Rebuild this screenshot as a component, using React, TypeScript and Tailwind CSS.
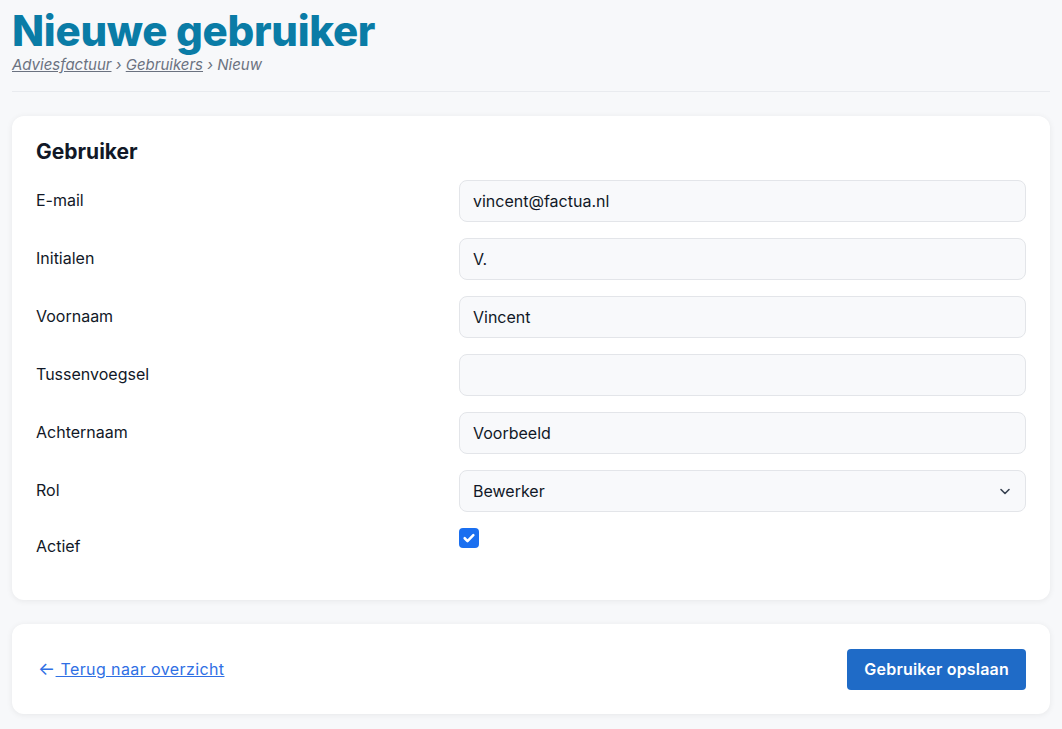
import { useState } from "react";

const font = { fontFamily: "Inter, 'Noto Sans', sans-serif" };

function Field({ label, value }: { label: string; value: string }) {
  const [v, setV] = useState(value);
  return (
    <div className="flex items-center h-[42px]">
      <label className="w-[423px] text-[16px] text-[#111827] -mt-[2px]">{label}</label>
      <input
        value={v}
        onChange={(e) => setV(e.target.value)}
        className="flex-1 h-[42px] px-[13px] text-[16px] text-[#111827] bg-[#f8f9fb] border border-[#e3e5e9] rounded-[8px] outline-none"
      />
    </div>
  );
}

export default function App() {
  const [rol, setRol] = useState("Bewerker");
  const [actief, setActief] = useState(true);

  return (
    <main className="min-h-screen w-full bg-[#f7f8fa] px-[12px] pb-[15px]" style={font}>
      <div className="pt-[6px] pb-[17px] border-b border-[#e9ebef]">
        <h1 className="text-[42px] leading-[50px] font-extrabold text-[#0a7ca6] tracking-[-0.3px]">
          Nieuwe gebruiker
        </h1>
        <div className="text-[15px] italic text-[#6b7280] leading-[18px]">
          <a href="#" className="underline">Adviesfactuur</a>
          <span> › </span>
          <a href="#" className="underline">Gebruikers</a>
          <span> › </span>
          <span>Nieuw</span>
        </div>
      </div>

      <section className="mt-[24px] bg-white rounded-[12px] shadow-[0_1px_6px_rgba(0,0,0,0.07)] px-[24px] pt-[23px] pb-[30px]">
        <h2 className="text-[21px] font-bold text-[#111827] leading-[26px] mb-[15px]">Gebruiker</h2>
        <div className="flex flex-col gap-[16px]">
          <Field label="E-mail" value="vincent@factua.nl" />
          <Field label="Initialen" value="V." />
          <Field label="Voornaam" value="Vincent" />
          <Field label="Tussenvoegsel" value="" />
          <Field label="Achternaam" value="Voorbeeld" />
          <div className="flex items-center h-[42px]">
            <label className="w-[423px] text-[16px] text-[#111827] -mt-[2px]">Rol</label>
            <div className="flex-1 relative">
              <select
                value={rol}
                onChange={(e) => setRol(e.target.value)}
                className="appearance-none w-full h-[42px] px-[13px] text-[16px] text-[#111827] bg-[#f8f9fb] border border-[#e3e5e9] rounded-[8px] outline-none"
              >
                <option>Bewerker</option>
                <option>Beheerder</option>
              </select>
              <svg
                className="absolute right-[15px] top-[15px] pointer-events-none"
                width="12"
                height="12"
                viewBox="0 0 12 12"
                fill="none"
                stroke="#374151"
                strokeWidth="1.6"
                strokeLinecap="round"
                strokeLinejoin="round"
              >
                <path d="M2 4.5l4 4 4-4" />
              </svg>
            </div>
          </div>
          <div className="flex items-start h-[42px]">
            <label className="w-[423px] text-[16px] text-[#111827] pt-[6px]">Actief</label>
            <button
              type="button"
              onClick={() => setActief(!actief)}
              className={
                actief
                  ? "w-[20px] h-[20px] rounded-[4px] bg-[#1a6ff0] flex items-center justify-center"
                  : "w-[20px] h-[20px] rounded-[4px] bg-white border border-[#c5c9d0]"
              }
            >
              {actief && (
                <svg width="14" height="14" viewBox="0 0 12 12" fill="none" stroke="white" strokeWidth="2.2" strokeLinecap="round" strokeLinejoin="round">
                  <path d="M2.3 6.2l2.4 2.4 5-5" />
                </svg>
              )}
            </button>
          </div>
        </div>
      </section>

      <section className="mt-[24px] bg-white rounded-[12px] shadow-[0_1px_6px_rgba(0,0,0,0.07)] px-[24px] h-[90px] flex items-center justify-between">
        <a href="#" className="text-[16px] text-[#2f6fe4] flex items-center ml-[2px] tracking-[0.4px]">
          <span className="inline-block text-[18px] leading-none">←</span>
          <span className="underline whitespace-pre"> Terug naar overzicht</span>
        </a>
        <button className="h-[41px] px-[17px] rounded-[4px] bg-[#1f6bc7] text-white text-[16px] font-semibold tracking-[0.2px]">
          Gebruiker opslaan
        </button>
      </section>
    </main>
  );
}
